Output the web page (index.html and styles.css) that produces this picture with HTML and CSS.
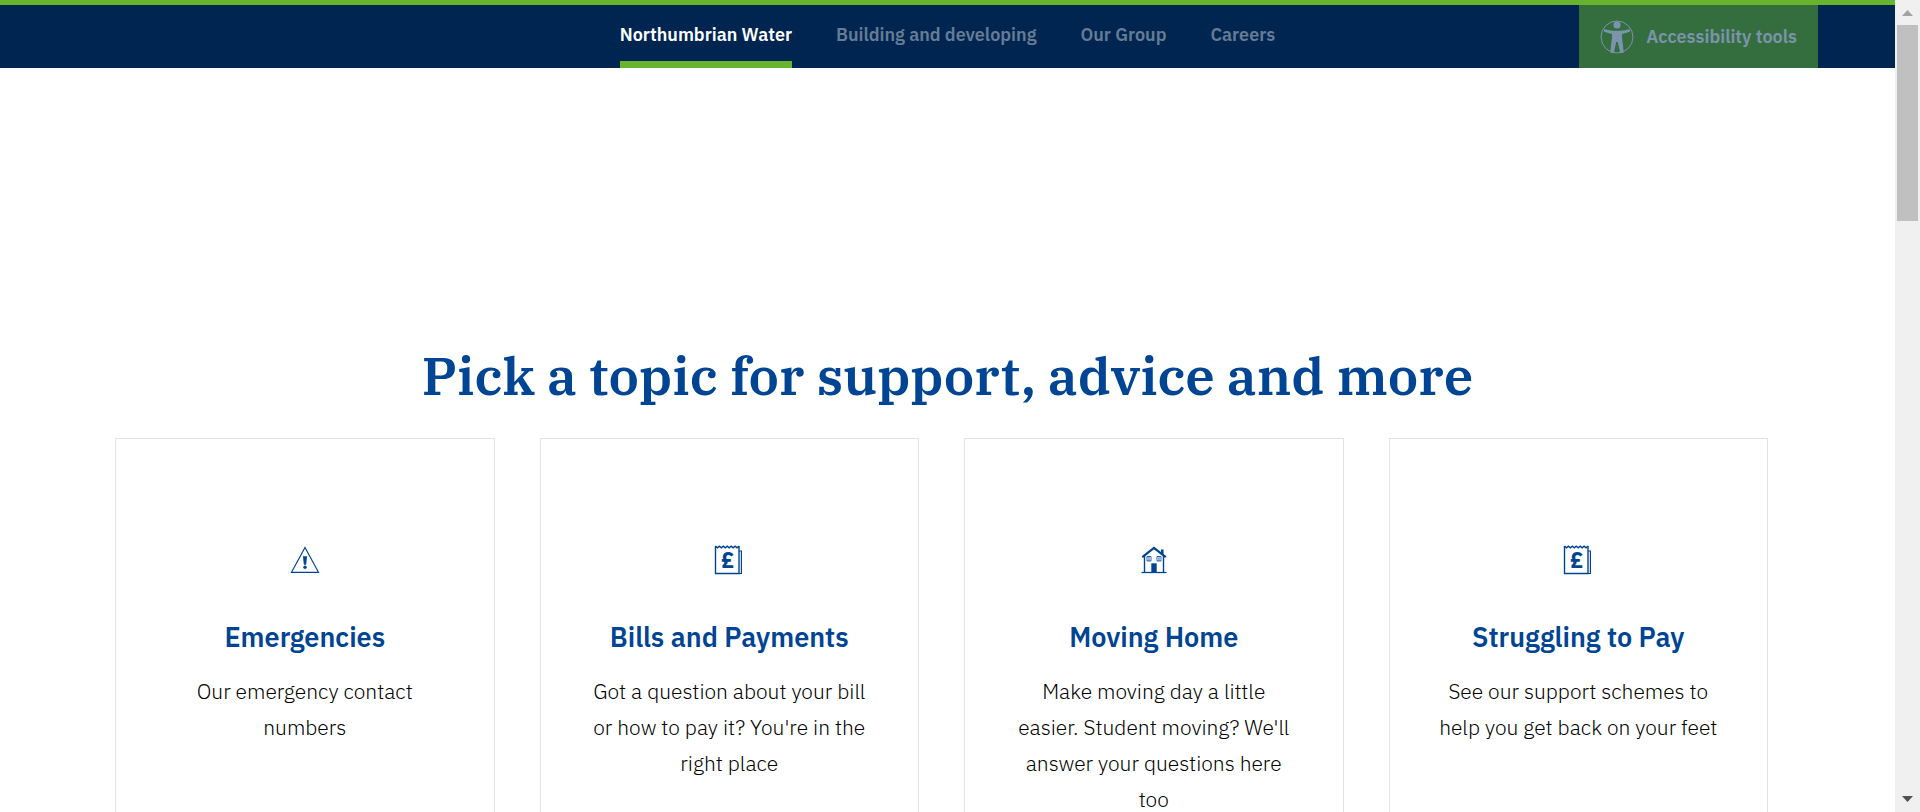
FILE: index.html
```html
<!DOCTYPE html>
<html lang="en">
<head>
<meta charset="utf-8">
<meta name="viewport" content="width=device-width, initial-scale=1">
<title>Northumbrian Water</title>
<link rel="stylesheet" href="styles.css">
</head>
<body>
<div class="window">
  <div class="page">
    <header class="topbar">
      <nav class="topnav" aria-label="Sites">
        <a class="topnav-link is-active" href="#" aria-current="page">Northumbrian Water</a>
        <a class="topnav-link" href="#">Building and developing</a>
        <a class="topnav-link" href="#">Our Group</a>
        <a class="topnav-link" href="#">Careers</a>
      </nav>
      <button class="access" type="button">
        <svg class="access-icon" viewBox="0 0 34 34" aria-hidden="true">
          <circle cx="17" cy="17" r="16" fill="none" stroke="currentColor" stroke-width="1"/>
          <circle cx="17" cy="5" r="3.6" fill="currentColor"/>
          <path fill="currentColor" d="M5 9.2c4 1.300 7.500 1.600 12 1.600s8-.3 12-1.600c1.300-.4 1.700 2 .6 2.500-2.400 1.100-4.900 1.700-7.600 2.200-.4 3 .3 5.600.7 9l1 9.600-3.400.7L17.800 22h-1.600l-2.500 11.200-3.400-.7 1-9.600c.4-3.400 1.100-6 .7-9-2.700-.5-5.200-1.100-7.600-2.200C3.300 11.200 3.700 8.800 5 9.200z"/>
        </svg>
        <span>Accessibility tools</span>
      </button>
    </header>

    <main class="topics">
      <h1 class="topics-title">Pick a topic for support, advice and more</h1>
      <div class="cards">
        <a class="card" href="#">
          <svg class="card-icon" viewBox="0 0 30 30" aria-hidden="true">
            <path d="M15 2.500 28.500 27.300H1.500z" fill="none" stroke="currentColor" stroke-width="1.200"/>
            <path d="M12.900 11.200h4.200l-1 8.500h-2.200z" fill="currentColor"/>
            <circle cx="15" cy="22.300" r="1.700" fill="currentColor"/>
          </svg>
          <h2 class="card-title">Emergencies</h2>
          <p class="card-text">Our emergency contact numbers</p>
        </a>
        <a class="card" href="#">
          <svg class="card-icon" viewBox="0 0 30 30" aria-hidden="true">
            <path d="M1.500 1v27.500h23.500V1" fill="none" stroke="currentColor" stroke-width="1.400"/>
            <path d="M1.500 1.200 3.500 2.800 5.400 1.200 7.400 2.800 9.300 1.200 11.300 2.800 13.200 1.200 15.200 2.800 17.200 1.200 19.100 2.800 21.100 1.200 23 2.800 25 1.200" fill="none" stroke="currentColor" stroke-width="1.500"/>
            <path d="M25 6h2.400v22.500H25" fill="none" stroke="currentColor" stroke-width="1.200"/>
            <text class="card-glyph" x="13.300" y="23" text-anchor="middle">£</text>
          </svg>
          <h2 class="card-title">Bills and Payments</h2>
          <p class="card-text">Got a question about your bill or how to pay it? You're in the right place</p>
        </a>
        <a class="card" href="#">
          <svg class="card-icon" viewBox="0 0 30 30" aria-hidden="true">
            <path d="M3.300 12.200 15 3l11.700 9.200" fill="none" stroke="currentColor" stroke-width="2.200"/>
            <path d="M22 4.500h2.500v6L22 8.500z" fill="currentColor"/>
            <path d="M5.500 11v16.500M24.500 11v16.500" fill="none" stroke="currentColor" stroke-width="1.400"/>
            <path d="M2.500 27.500h25" stroke="currentColor" stroke-width="1.300"/>
            <path d="M8 11.500h4v4.500H8zM10 11.500V16M18 11.500h4v4.500h-4zM20 11.500V16" fill="none" stroke="currentColor" stroke-width=".8"/>
            <path d="M12.300 18.300h5.400v9.200h-5.400z" fill="currentColor"/>
          </svg>
          <h2 class="card-title">Moving Home</h2>
          <p class="card-text">Make moving day a little easier. Student moving? We'll answer your questions here too</p>
        </a>
        <a class="card" href="#">
          <svg class="card-icon" viewBox="0 0 30 30" aria-hidden="true">
            <path d="M1.500 1v27.500h23.500V1" fill="none" stroke="currentColor" stroke-width="1.400"/>
            <path d="M1.500 1.200 3.500 2.800 5.400 1.200 7.400 2.800 9.300 1.200 11.300 2.800 13.200 1.200 15.200 2.800 17.200 1.200 19.100 2.800 21.100 1.200 23 2.800 25 1.200" fill="none" stroke="currentColor" stroke-width="1.500"/>
            <path d="M25 6h2.400v22.500H25" fill="none" stroke="currentColor" stroke-width="1.200"/>
            <text class="card-glyph" x="13.300" y="23" text-anchor="middle">£</text>
          </svg>
          <h2 class="card-title">Struggling to Pay</h2>
          <p class="card-text">See our support schemes to help you get back on your feet</p>
        </a>
      </div>
    </main>
  </div>

  <div class="scrollbar" aria-hidden="true">
    <svg class="scroll-arrow" viewBox="0 0 25 25"><path d="M12.500 10 18 16H7z" fill="#a3a3a3"/></svg>
    <div class="scroll-track"><div class="scroll-thumb"></div></div>
    <svg class="scroll-arrow" viewBox="0 0 25 25"><path d="M7 9h11l-5.500 6z" fill="#505050"/></svg>
  </div>
</div>
</body>
</html>
```
FILE: styles.css
```css
* {
  box-sizing: border-box;
}

body {
  margin: 0;
  color: #000;
  background: #fff;
  font-family: "IBM Plex Sans", "Noto Sans", sans-serif;
}

.window {
  display: flex;
  height: 100vh;
  overflow: hidden;
}

.page {
  flex: 1;
  min-width: 0;
  overflow: hidden;
}

.topbar {
  display: grid;
  grid-template-columns: 1fr auto 1fr;
  height: 68px;
  border-top: 5px solid #69b42f;
  background: #002550;
}

.topnav {
  grid-column: 2;
  display: flex;
  gap: 44px;
}

.topnav-link {
  display: flex;
  align-items: center;
  padding-top: 3px;
  border-bottom: 7px solid transparent;
  color: #667c96;
  font-size: 18px;
  font-weight: 600;
  white-space: nowrap;
  text-decoration: none;
}

.topnav-link.is-active {
  border-bottom-color: #69b42f;
  color: #fff;
}

.access {
  justify-self: end;
  display: flex;
  align-items: center;
  gap: 12px;
  margin-right: 77px;
  padding: 0 21px;
  border: 0;
  background: #346e3f;
  color: #7c93ac;
  font-family: inherit;
  font-size: 18px;
  font-weight: 600;
  white-space: nowrap;
}

.access-icon {
  width: 34px;
  height: 34px;
}

.topics {
  padding: 270px 127px 0 115px;
}

.topics-title {
  margin: 0 -12px 24px 0;
  color: #004494;
  font-family: "Roboto Slab", "IBM Plex Serif", "DejaVu Serif Condensed", "DejaVu Serif", serif;
  font-size: 53px;
  font-weight: 600;
  line-height: 76px;
  text-align: center;
}

.cards {
  display: grid;
  grid-template-columns: repeat(4, 1fr);
  gap: 45px;
}

.card {
  padding: 106px 45px;
  border: 1px solid #e3e3e3;
  color: inherit;
  text-align: center;
  text-decoration: none;
}

.card-icon {
  display: block;
  width: 30px;
  height: 30px;
  margin: 0 auto 44px;
  color: #004494;
}

.card-glyph {
  fill: currentColor;
  font-size: 22px;
  font-weight: 700;
}

.card-title {
  margin: 0 0 18px;
  color: #004494;
  font-size: 27px;
  font-weight: 600;
  line-height: 36px;
}

.card-text {
  margin: 0;
  font-size: 21px;
  font-weight: 300;
  line-height: 36px;
}

.scrollbar {
  display: flex;
  flex-direction: column;
  width: 25px;
  background: #f0f0f0;
}

.scroll-arrow {
  width: 25px;
  height: 25px;
}

.scroll-track {
  flex: 1;
  padding: 0 2px;
}

.scroll-thumb {
  height: 196px;
  background: #c0c0c0;
}
```
